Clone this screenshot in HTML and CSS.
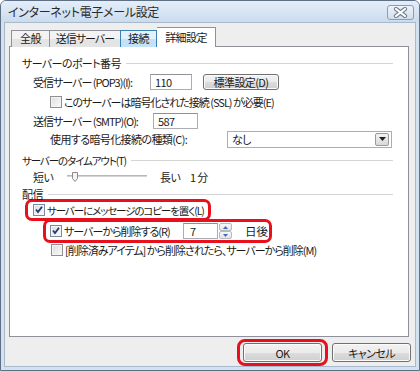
FILE: index.html
```html
<!DOCTYPE html>
<html lang="ja">
<head>
    <meta charset="UTF-8">
    <title>インターネット電子メール設定</title>
    <link rel="stylesheet" href="styles.css">
</head>
<body>
<div class="window">
    <div class="titlebar">
        <span class="title">インターネット電子メール設定</span>
        <span class="close-btn">
            <svg width="15" height="11" viewBox="0 0 15 11">
                <path d="M3 2 L12 9 M12 2 L3 9" stroke="#6f7f93" stroke-width="4.2" stroke-linecap="round"/>
                <path d="M3 2 L12 9 M12 2 L3 9" stroke="#ffffff" stroke-width="2.2" stroke-linecap="round"/>
            </svg>
        </span>
    </div>

    <div class="body">
        <div class="tabs">
            <span class="tab">全般</span>
            <span class="tab tight">送信サーバー</span>
            <span class="tab hover">接続</span>
            <span class="tab active">詳細設定</span>
        </div>

        <div class="panel">
            <div class="group-head"><span>サーバーのポート番号</span><i class="rule"></i></div>

            <div class="row row-pop">
                <span class="label w-pop tight">受信サーバー (POP3)(I):</span>
                <span class="textbox tb-pop">110</span>
                <span class="button btn-default">標準設定(D)</span>
            </div>

            <div class="row row-ssl">
                <span class="check"></span>
                <span class="tight">このサーバーは暗号化された接続 (SSL) が必要(E)</span>
            </div>

            <div class="row row-smtp">
                <span class="label w-smtp tight">送信サーバー (SMTP)(O):</span>
                <span class="textbox tb-smtp">587</span>
            </div>

            <div class="row row-enc">
                <span class="label w-enc">使用する暗号化接続の種類(C):</span>
                <span class="select">
                    <span class="select-text">なし</span>
                    <span class="select-arrow">
                        <svg width="7" height="5" viewBox="0 0 7 5"><path d="M0 0 H7 L3.5 4 Z" fill="#222"/></svg>
                    </span>
                </span>
            </div>

            <div class="group-head head-timeout"><span class="tighter">サーバーのタイムアウト(T)</span><i class="rule"></i></div>

            <div class="row row-slider">
                <span class="w-short">短い</span>
                <svg class="slider" width="80" height="12" viewBox="0 0 80 12">
                    <rect x="0" y="4" width="80" height="2" fill="#d4d4d4"/>
                    <rect x="0" y="4" width="80" height="1" fill="#b8b8b8"/>
                    <path d="M5.5 1.5 H10.5 V7.5 L8 10.5 L5.5 7.5 Z" fill="#f4f4f4" stroke="#8a8a8a"/>
                </svg>
                <span class="w-long">長い</span>
                <span>1 分</span>
            </div>

            <div class="group-head head-delivery"><span>配信</span><i class="rule"></i></div>

            <div class="row mark mark-copy">
                <span class="check checked"></span>
                <span class="tighter">サーバーにメッセージのコピーを置く(L)</span>
            </div>

            <div class="row mark mark-delete">
                <span class="check checked"></span>
                <span class="w-delete tight">サーバーから削除する(R)</span>
                <span class="textbox tb-days">7</span>
                <span class="spinner">
                    <span class="spin"><svg width="5" height="3" viewBox="0 0 5 3"><path d="M0 3 H5 L2.5 0 Z" fill="#3d6fb0"/></svg></span>
                    <span class="spin"><svg width="5" height="3" viewBox="0 0 5 3"><path d="M0 0 H5 L2.5 3 Z" fill="#3d6fb0"/></svg></span>
                </span>
                <span class="days">日後</span>
            </div>

            <div class="row row-deleted">
                <span class="check"></span>
                <span class="tight">[削除済みアイテム] から削除されたら、サーバーから削除(M)</span>
            </div>
        </div>

        <div class="footer">
            <span class="mark mark-ok"><span class="button btn-wide">OK</span></span>
            <span class="button btn-wide btn-cancel">キャンセル</span>
        </div>
    </div>
</div>
</body>
</html>
```

FILE: styles.css
```css
* {
    box-sizing: border-box;
}

body {
    margin: 0;
    padding: 0;
    font-family: "Noto Sans CJK JP", "Noto Sans", sans-serif;
    font-size: 11px;
    letter-spacing: -0.6px;
    color: #1b1b1b;
    font-feature-settings: "palt";
    white-space: nowrap;
    background: #ffffff;
}

.tight {
    letter-spacing: -1px;
}

.tighter {
    font-size: 10.5px;
    letter-spacing: -1.1px;
}

.window {
    width: 420px;
    height: 371px;
    border: 1px solid #5f6f84;
    border-radius: 6px 6px 0 0;
    background: #d3e1f1;
    display: flex;
    flex-direction: column;
}

.titlebar {
    height: 21px;
    display: flex;
    justify-content: space-between;
    align-items: flex-start;
    padding: 0 5px 0 7px;
    background: linear-gradient(#e4eef9, #cbdcef);
    border-radius: 5px 5px 0 0;
}

.title {
    font-size: 12px;
    letter-spacing: -0.3px;
    line-height: 21px;
    color: #2a2a2a;
}

.close-btn {
    margin-top: 4px;
    width: 27px;
    height: 15px;
    border: 1px solid #8d9db3;
    border-radius: 3px;
    background: linear-gradient(#eef3f9, #d3deeb);
    display: flex;
    justify-content: center;
    align-items: center;
}

.body {
    flex: 1;
    margin: 0 3px 3px;
    background: #eeeeee;
    border: 1px solid #a9b9cc;
    padding: 4px 4px 0 4px;
}

/* tabs */

.tabs {
    display: flex;
    align-items: flex-end;
    height: 20px;
    padding-left: 2px;
}

.tab {
    flex: none;
    height: 17px;
    padding: 0;
    line-height: 15px;
    border: 1px solid #8e9199;
    border-bottom: none;
    border-right: none;
    background: linear-gradient(#f3f3f3 50%, #e4e4e4 50%);
    text-align: center;
}

.tab:nth-child(1) {
    width: 38px;
}

.tab:nth-child(2) {
    width: 71px;
}

.tab.hover {
    width: 37px;
    border-color: #3c7fb1;
    border-right: 1px solid #3c7fb1;
    background: linear-gradient(#e2f2fc 50%, #c2e3f7 50%);
}

.tab.active {
    position: relative;
    z-index: 1;
    width: 59px;
    height: 20px;
    line-height: 18px;
    background: #ffffff;
    border-right: 1px solid #8e9199;
    border-left: none;
}

.panel {
    margin-top: -1px;
    width: 400px;
    height: 291px;
    border: 1px solid #8e9199;
    background: #ffffff;
    padding: 7px 15px 0 12px;
}

/* rows */

.group-head {
    display: flex;
    align-items: center;
    height: 18px;
}

.rule {
    flex: 1;
    height: 1px;
    margin-left: 5px;
    background: #d5d5d5;
}

.head-timeout {
    margin-top: 4px;
    height: 16px;
}

.head-delivery {
    height: 16px;
}

.row {
    display: flex;
    align-items: center;
}

.row > * {
    flex: none;
}

.row-pop {
    height: 20px;
    padding-left: 11px;
}

.w-pop {
    width: 117px;
}

.row-ssl {
    height: 20px;
    padding-left: 28px;
}

.row-smtp {
    height: 18px;
    padding-left: 11px;
}

.w-smtp {
    width: 120px;
}

.row-enc {
    height: 18px;
    padding-left: 28px;
}

.w-enc {
    width: 177px;
}

.row-slider {
    height: 18px;
    padding-left: 11px;
}

.w-short {
    width: 34px;
}

.slider {
    width: 80px;
}

.w-long {
    margin-left: 13px;
    width: 30px;
}

.row-deleted {
    height: 16px;
    margin-top: -1px;
    padding-left: 29px;
}

/* red highlight marks */

.mark {
    border: 3px solid #e8101c;
    border-radius: 7px;
}

.mark-copy {
    margin-left: 3px;
    margin-top: -3px;
    width: 186px;
    height: 22px;
    padding-left: 5px;
}

.mark-delete {
    margin-left: 21px;
    margin-top: -2px;
    width: 229px;
    height: 24px;
    padding-left: 4px;
}

.w-delete {
    width: 119px;
}

.mark-ok {
    display: inline-flex;
    padding: 1px 3px;
    border-radius: 8px;
}

/* controls */

.check {
    width: 12px;
    height: 12px;
    margin-right: 2px;
    border: 1px solid #8f8f8f;
    background: linear-gradient(135deg, #dcdcdc, #fbfbfb);
    box-shadow: inset 0 0 0 1px #f4f4f4;
}

.check.checked {
    border-color: #7b8aa3;
    background:
        url("data:image/svg+xml,%3Csvg xmlns='http://www.w3.org/2000/svg' width='10' height='10'%3E%3Cpath d='M2 4.5 L4 7 L8 1.8' fill='none' stroke='%231f3a74' stroke-width='1.8'/%3E%3C/svg%3E") center no-repeat,
        linear-gradient(135deg, #dcdcdc, #fbfbfb);
}

.textbox {
    height: 16px;
    border: 1px solid #abadb3;
    border-top-color: #8e9199;
    background: #ffffff;
    padding-left: 4px;
    line-height: 14px;
}

.tb-pop {
    width: 42px;
}

.tb-smtp {
    width: 45px;
}

.tb-days {
    width: 35px;
    padding-left: 6px;
}

.button {
    display: inline-flex;
    justify-content: center;
    align-items: center;
    border: 1px solid #707070;
    border-radius: 3px;
    background: linear-gradient(#f2f2f2 0%, #ebebeb 50%, #dddddd 50%, #cfcfcf 100%);
    box-shadow: inset 0 0 0 1px #fbfbfb;
}

.btn-default {
    margin-left: 11px;
    width: 76px;
    height: 16px;
}

.select {
    display: flex;
    align-items: center;
    width: 165px;
    height: 17px;
    border: 1px solid #abadb3;
    background: #ffffff;
    padding: 0 2px 0 4px;
}

.select-text {
    flex: 1;
}

.select-arrow {
    width: 14px;
    height: 13px;
    border: 1px solid #9a9a9a;
    border-radius: 2px;
    background: linear-gradient(#f4f4f4, #d8d8d8);
    display: flex;
    justify-content: center;
    align-items: center;
}

.spinner {
    display: flex;
    flex-direction: column;
    margin-left: 1px;
    width: 13px;
    height: 16px;
}

.spin {
    flex: 1;
    border: 1px solid #b5b9c0;
    border-radius: 2px;
    background: linear-gradient(#f7f7f7, #e1e4ea);
    display: flex;
    justify-content: center;
    align-items: center;
}

.days {
    margin-left: 13px;
    font-size: 11.5px;
    letter-spacing: 0;
}

/* footer */

.footer {
    display: flex;
    justify-content: flex-end;
    align-items: flex-start;
    gap: 4px;
    padding: 2px 0 0 0;
}

.btn-wide {
    width: 79px;
    height: 19px;
}

.btn-cancel {
    margin-top: 4px;
}
```
